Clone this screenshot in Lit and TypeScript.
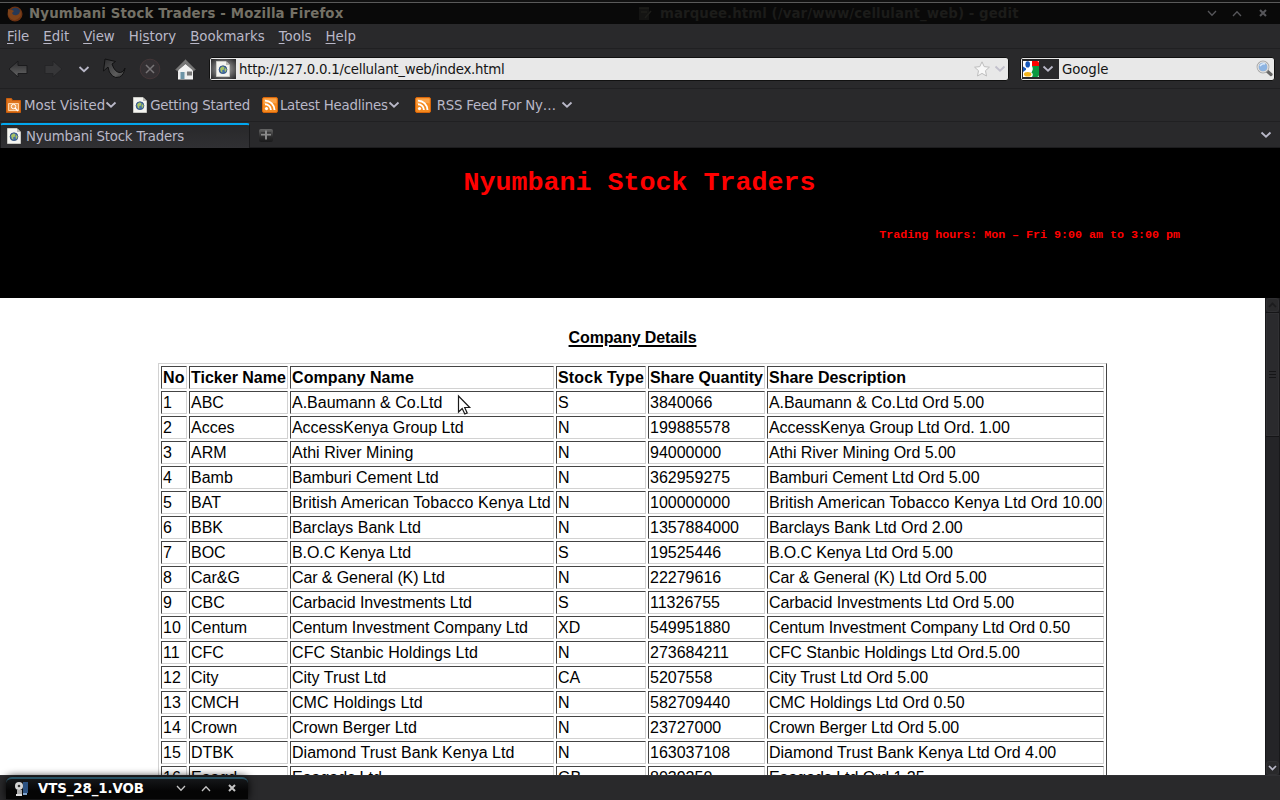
import { LitElement, html, css } from "lit";
import { customElement } from "lit/decorators.js";

// Header label with its tracking in px.
const HEADERS: [string, number][] = [
  ["No", 0.2], ["Ticker Name", 0], ["Company Name", 0.08], ["Stock Type", 0.18], ["Share Quantity", -0.07], ["Share Description", 0],
];

const ROWS: string[][] = [
  ["1", "ABC", "A.Baumann & Co.Ltd", "S", "3840066", "A.Baumann & Co.Ltd Ord 5.00"],
  ["2", "Acces", "AccessKenya Group Ltd", "N", "199885578", "AccessKenya Group Ltd Ord. 1.00"],
  ["3", "ARM", "Athi River Mining", "N", "94000000", "Athi River Mining Ord 5.00"],
  ["4", "Bamb", "Bamburi Cement Ltd", "N", "362959275", "Bamburi Cement Ltd Ord 5.00"],
  ["5", "BAT", "British American Tobacco Kenya Ltd", "N", "100000000", "British American Tobacco Kenya Ltd Ord 10.00"],
  ["6", "BBK", "Barclays Bank Ltd", "N", "1357884000", "Barclays Bank Ltd Ord 2.00"],
  ["7", "BOC", "B.O.C Kenya Ltd", "S", "19525446", "B.O.C Kenya Ltd Ord 5.00"],
  ["8", "Car&G", "Car & General (K) Ltd", "N", "22279616", "Car & General (K) Ltd Ord 5.00"],
  ["9", "CBC", "Carbacid Investments Ltd", "S", "11326755", "Carbacid Investments Ltd Ord 5.00"],
  ["10", "Centum", "Centum Investment Company Ltd", "XD", "549951880", "Centum Investment Company Ltd Ord 0.50"],
  ["11", "CFC", "CFC Stanbic Holdings Ltd", "N", "273684211", "CFC Stanbic Holdings Ltd Ord.5.00"],
  ["12", "City", "City Trust Ltd", "CA", "5207558", "City Trust Ltd Ord 5.00"],
  ["13", "CMCH", "CMC Holdings Ltd", "N", "582709440", "CMC Holdings Ltd Ord 0.50"],
  ["14", "Crown", "Crown Berger Ltd", "N", "23727000", "Crown Berger Ltd Ord 5.00"],
  ["15", "DTBK", "Diamond Trust Bank Kenya Ltd", "N", "163037108", "Diamond Trust Bank Kenya Ltd Ord 4.00"],
  ["16", "Eaagd", "Eaagads Ltd", "GB", "8039250", "Eaagads Ltd Ord 1.25"],
];

// Width adjustment in px for the name and description of each row.
const NAME_FIT = [0, -1, 0.5, 0, 3, 0, -1, -2, -1.5, -2.5, 2, 0, 1, -0.5, 1, 0];
const DESC_FIT = [-2, -3, -1, -3, 2, -2, -3, -4, -3, -4, 0, -2, -1, -2, -1, -1];

const tracking = (row: number, col: number, text: string) => {
  const fit = col === 2 ? NAME_FIT[row] : col === 5 ? DESC_FIT[row] : 0;
  return `letter-spacing:${(fit / text.length).toFixed(3)}px`;
};

const chevron = (cls = "") => html`<svg class="chev ${cls}" width="12" height="8" viewBox="0 0 12 8"><path d="M1.500 1.500 L6 5.700 L10.500 1.500" fill="none" stroke="currentColor" stroke-width="1.800"/></svg>`;

const page = html`<svg width="14" height="16" viewBox="0 0 14 16">
  <path d="M.5.5H10l3.500 3.500V15.500H.5z" fill="#f4f4f0" stroke="#c9c9c4"/>
  <path d="M10 .5V4h3.500z" fill="#b9b9b4"/>
  <circle cx="7" cy="8.700" r="3.900" fill="#4470a8" stroke="#2c4b78" stroke-width=".8"/>
  <path d="M4 7.500l2-2 2.500.5-.5 2.500-2 1 .5 2-1.500-.5zM8.500 8l1.500-1 .6 2-1.600 2.500z" fill="#a9c464"/>
</svg>`;

const rss = html`<svg width="16" height="16" viewBox="0 0 16 16">
  <rect x=".5" y=".5" width="15" height="15" rx="1.500" fill="#f58a1f" stroke="#d8650a"/>
  <path d="M1.500 1.500h13v5q-6-2-13 1z" fill="#fba349"/>
  <circle cx="4.500" cy="11.600" r="1.600" fill="#fff"/>
  <path d="M3 7.200a5.900 5.900 0 0 1 5.900 5.900M3 3.600a9.500 9.500 0 0 1 9.500 9.500" fill="none" stroke="#fff" stroke-width="1.900"/>
</svg>`;

const winButtons = () => html`<span class="wb">
  <svg width="10" height="7" viewBox="0 0 10 7"><path d="M1 1l4 4.300L9 1" fill="none" stroke="currentColor" stroke-width="1.300"/></svg>
  <svg width="10" height="7" viewBox="0 0 10 7"><path d="M1 6l4-4.300L9 6" fill="none" stroke="currentColor" stroke-width="1.300"/></svg>
  <svg class="x" width="8" height="8" viewBox="0 0 8 8"><path d="M1 1l6 6M7 1L1 7" stroke="currentColor" stroke-width="2"/></svg>
</span>`;

@customElement("app-root")
export class AppRoot extends LitElement {
  static styles = css`
    :host { display: flex; flex-direction: column; position: relative; width: 1280px; height: 800px; overflow: hidden; background: #29292b;
      font-family: "DejaVu Sans", sans-serif; font-size: 13.33px; color: #b9b8c8; white-space: nowrap; }
    * { box-sizing: border-box; }
    svg { display: block; flex: none; }
    .grow { flex: 1; }
    .title { height: 24px; background: #090909; border-top: 2px solid #111; display: flex; align-items: center; padding: 1px 13px 0 7px; font-weight: bold; color: #747166; box-shadow: inset 0 1px #5a5a5a; }
    .title .name { margin-left: 6px; width: 608px; letter-spacing: .15px; }
    .title .ghost { color: #1c1c1a; margin-left: 7px; letter-spacing: .08px; }
    .wb { display: flex; align-items: center; gap: 15px; color: #56565a; margin-bottom: 1px; }
    .wb .x { margin-left: 2px; }
    .menu { height: 25px; display: flex; align-items: center; gap: 14px; padding: 0 7px; border-bottom: 1px solid #202022; }
    .menu u { text-underline-offset: 2px; }
    .nav { height: 40px; display: flex; align-items: center; border-bottom: 1px solid #202022; padding: 0 5px 0 8px; }
    .url, .search { height: 24px; display: flex; align-items: center; background: #e8e8e8; border: 1px solid #111; border-radius: 3px; color: #151515; }
    .url { width: 800px; padding: 0 2px 0 1px; }
    .url .text { letter-spacing: -.25px; padding-top: 1px; }
    .search .text { letter-spacing: -.1px; padding-top: 1px; }
    .fav { width: 25px; height: 20px; display: flex; align-items: center; justify-content: center; background: radial-gradient(#aaa 10%, #303032 90%); margin-right: 3px; padding-right: 2px; }
    .search { width: 255px; margin-left: 11px; padding: 0 1px; }
    .eng { width: 37px; height: 20px; background: #29292b; display: flex; align-items: center; gap: 3px; padding-left: 1px; margin-right: 3px; }
    .chev { color: #b9b8c8; }
    .pale { color: #c2c0cc; margin-left: 4px; }
    .marks { height: 33px; display: flex; align-items: center; border-bottom: 1px solid #202022; padding: 0 6px; }
    .marks span { margin-left: 3px; letter-spacing: -.22px; }
    .marks .m1 { letter-spacing: 0; }
    .marks .near { margin-left: 2px; }
    .g1 { margin-left: 16px; }
    .marks .rss1 { margin-left: 12px; }
    .marks .rss2 { margin-left: 15px; }
    .marks .far { margin-left: 6px; margin-right: 5px; }
    .tabs { height: 26px; display: flex; align-items: center; padding-right: 8px; border-bottom: 1px solid #1c1c1e; }
    .tab { width: 250px; height: 25px; margin-top: 1px; border-top: 2px solid #02a7ef; border-right: 1px solid #19191b; border-left: 1px solid #19191b; border-radius: 3px 3px 0 0; background: linear-gradient(#28282a, #303033); display: flex; align-items: center; padding-left: 6px; gap: 5px; letter-spacing: -.2px; }
    .plus { margin-left: 9px; margin-top: 2px; }
    .banner { height: 150px; background: #000; color: #f00; font-family: "Courier 10 Pitch", "Liberation Mono", monospace; font-weight: bold; display: flex; flex-direction: column; }
    .h1 { font-size: 26.67px; line-height: 30px; margin-top: 20px; text-align: center; padding-right: 1px; }
    .hours { font-size: 11.67px; line-height: 14px; text-align: right; margin: 30px 100px 0 0; }
    .view { height: 477px; display: flex; background: #fff; overflow: hidden; }
    .doc { width: 1265px; display: flex; flex-direction: column; align-items: center; color: #000; font: 16px/19px "Liberation Sans", Arial, sans-serif; }
    .cap { font-weight: bold; line-height: 18px; margin: 31px 0 16px; letter-spacing: -.13px; text-decoration: underline; text-decoration-thickness: 2px; text-underline-offset: 2px; }
    .table { display: grid; grid-template-columns: 26px 99px 264px 90px 117px 337px; grid-auto-rows: 23px; gap: 2px; padding: 2px; border: 1px solid #d2d2d2; border-right-color: #444; width: 949px; flex: none; }
    .cell { border: 1px solid #444; border-right-color: #d2d2d2; border-bottom-color: #d2d2d2; padding: 1px; line-height: 20px; }
    .head { font-weight: bold; }
    .bar { width: 15px; background: #242427; border-left: 1px solid #18181a; border-right: 1px solid #18181a; display: flex; flex-direction: column; align-items: center; color: #1b1b1d; }
    .btn { width: 13px; height: 14px; border: 1px solid #303033; display: flex; align-items: center; justify-content: center; border-radius: 3px; background: #29292b; }
    .thumb { width: 13px; height: 123px; border: 1px solid #303033; background: #2a2a2d; box-shadow: 0 -1px #151517, 0 1px #151517; margin-top: 1px; display: flex; flex-direction: column; align-items: center; justify-content: center; gap: 2px; }
    .thumb i { width: 7px; height: 1px; background: #151517; }
    .lit { color: #b9b8c8; }
    .foot { height: 25px; border-top: 1px solid #303033; padding: 1px 0 0 6px; }
    .win { width: 242px; height: 22px; background: linear-gradient(#151719, #050505 60%); border-top: 2px solid #285263; border-radius: 6px 6px 0 0; display: flex; align-items: center; padding: 0 12px 1px 8px; color: #fff; font-weight: bold; box-shadow: 0 0 9px #000; }
    .win .name { margin-left: 8px; letter-spacing: -.08px; }
    .win .wb { color: #c4c4c4; }
    .cursor { position: absolute; left: 457px; top: 394px; }
  `;

  render() {
    return html`
      <div class="title">
        <svg width="16" height="16" viewBox="0 0 16 16"><circle cx="8" cy="8" r="7.500" fill="#6b3213"/><circle cx="8.500" cy="6.500" r="4.800" fill="#263957"/><path d="M1 3q2 1 4 1l2 1-2 2q1 3 5 2 3-1 3-5 2 4 0 7-4 5-9 2-4-3-3-10z" fill="#7d421a"/></svg>
        <span class="name">Nyumbani Stock Traders - Mozilla Firefox</span>
        <svg width="16" height="16" viewBox="0 0 16 16"><path d="M2 2h10v12H2z" fill="#141413"/><path d="M2 2h10M4 6h6M14 5L8 12" stroke="#1e1e1b" stroke-width="1.500"/></svg>
        <span class="ghost">marquee.html (/var/www/cellulant_web) - gedit</span>
        <span class="grow"></span>${winButtons()}
      </div>
      <div class="menu">
        <span><u>F</u>ile</span><span><u>E</u>dit</span><span><u>V</u>iew</span><span>Hi<u>s</u>tory</span><span><u>B</u>ookmarks</span><span><u>T</u>ools</span><span><u>H</u>elp</span>
      </div>
      <div class="nav">
        <svg width="201" height="32" viewBox="0 0 201 32">
          <defs>
            <linearGradient id="a" x2="0" y2="1"><stop stop-color="#2c2c2e"/><stop offset="1" stop-color="#666"/></linearGradient>
            <linearGradient id="r" x2="1" y2="1"><stop stop-color="#2c2c2e"/><stop offset=".7" stop-color="#5c5c5c"/><stop offset="1" stop-color="#333"/></linearGradient>
            <linearGradient id="h" x2="0" y2="1"><stop stop-color="#ddd"/><stop offset="1" stop-color="#f5f5f5"/></linearGradient>
          </defs>
          <path d="M1 16l9-8v4.500h9v8h-9V24z" fill="url(#a)" stroke="#1b1b1d"/>
          <path d="M54 16l-9-8v4.500h-8v8h8V24z" fill="#363638" stroke="#252527"/>
          <path d="M71.500 14l4.500 4.200 4.500-4.200" fill="none" stroke="#b9b8c8" stroke-width="1.800"/>
          <path d="M97 6l10.500 2.500-3.500 2.500q3 9 8.500 8.500 3 0 4.500-4.500-1 7-5.500 9-4 1.500-7-1-4-3.500-4.500-9l-4.500 4z" fill="url(#r)" stroke="#101011"/>
          <circle cx="142" cy="16" r="9.800" fill="#343033" stroke="#443638"/>
          <path d="M138 12l8 8M146 12l-8 8" stroke="#777476" stroke-width="1.500"/>
          <path d="M171 15h14v11.500h-15V15z" fill="url(#h)"/>
          <path d="M167.500 16.500l10-10 10 10-2 1.500-8-7-8 7z" fill="#777" stroke="#555"/>
          <path d="M177.500 11l7 6v2h-14v-2z" fill="#f2f2f2"/>
          <path d="M172.500 19h4v7h-4z" fill="#6d94a6"/><path d="M179 18.500h5v4h-5z" fill="#777"/>
        </svg>
        <div class="url"><span class="fav">${page}</span><span class="text">http://127.0.0.1/cellulant_web/index.html</span><span class="grow"></span>
          <svg width="16" height="16" viewBox="0 0 16 16"><path d="M8 .8l2.200 4.800 5.200.6-3.900 3.500 1 5.300L8 12.400 3.500 15l1-5.300L.6 6.200l5.200-.6z" fill="#f8f8f8" stroke="#bdbdbd"/></svg>
          ${chevron("pale")}
        </div>
        <div class="search"><span class="eng">
          <svg width="16" height="16" viewBox="0 0 16 16"><path d="M0 0h16v16H0z" fill="#fff"/><path d="M9 0h5q2 0 2 2v3H9z" fill="#f00"/><path d="M9 5h7v9q0 2-2 2H9q2-3-1-5 3-2 1-6z" fill="#0b9a42"/><path d="M0 5.500l4 2.500-4 3z" fill="#1557bb"/><ellipse cx="4.700" cy="3.400" rx="2.300" ry="3.100" fill="#1557bb"/><path d="M3 8q5 0 5 3" fill="none" stroke="#fff" stroke-width="2"/><ellipse cx="4.700" cy="13.300" rx="3.700" ry="2.300" fill="#f4b41a"/></svg>
          ${chevron()}</span><span class="text">Google</span><span class="grow"></span>
          <svg width="17" height="17" viewBox="0 0 17 17"><path d="M10.500 10.500l4.500 4" stroke="#666" stroke-width="3.200" stroke-linecap="round"/><circle cx="7" cy="7" r="5.400" fill="#8db4e2" stroke="#aaa" stroke-width="2"/><circle cx="7" cy="7" r="5" fill="none" stroke="#eee"/><path d="M4 6q2-3 5-2" stroke="#dcebfb" stroke-width="1.500" fill="none"/></svg>
        </div>
      </div>
      <div class="marks">
        <svg width="15" height="16" viewBox="0 0 15 16"><path d="M.5 1.500h5l1 2h8v12H.5z" fill="#dd741d" stroke="#c95c0c"/><path d="M2.500 6.500h10v7h-10z" fill="#ee9c51" stroke="#ffd5aa"/><circle cx="7.500" cy="9.500" r="2.200" fill="none" stroke="#fff"/><path d="M9 11l3 3" stroke="#fff" stroke-width="1.200"/></svg>
        <span class="m1">Most Visited</span>${chevron()}
        <div class="g1">${page}</div><span>Getting Started</span>
        <div class="rss1">${rss}</div><span class="near">Latest Headlines</span>${chevron()}
        <div class="rss2">${rss}</div><span class="far">RSS Feed For Ny…</span>${chevron()}
      </div>
      <div class="tabs">
        <div class="tab">${page}<span>Nyumbani Stock Traders</span></div>
        <svg class="plus" width="14" height="14" viewBox="0 0 14 14"><defs><linearGradient id="p" x2="0" y2="1"><stop stop-color="#666"/><stop offset=".6" stop-color="#2a2a2b"/><stop offset="1" stop-color="#1a1a1b"/></linearGradient></defs><rect width="14" height="13" rx="2" fill="url(#p)"/><path d="M2 5.500h10M7 1.500v9" stroke="#8a8a8a" stroke-width="2"/><path d="M2 4h4M8 4h4" stroke="#222"/></svg>
        <span class="grow"></span>${chevron()}
      </div>
      <div class="banner">
        <div class="h1">Nyumbani Stock Traders</div>
        <div class="hours">Trading hours: Mon – Fri 9:00 am to 3:00 pm</div>
      </div>
      <div class="view">
        <div class="doc">
          <div class="cap">Company Details</div>
          <div class="table">
            ${HEADERS.map(([h, ls]) => html`<div class="cell head" style="letter-spacing:${ls}px">${h}</div>`)}
            ${ROWS.map((r, i) => r.map((c, j) => html`<div class="cell" style=${tracking(i, j, c)}>${c}</div>`))}
          </div>
        </div>
        <div class="bar">
          <div class="btn"><svg width="9" height="6" viewBox="0 0 9 6"><path d="M1 5l3.500-3.500L8 5" fill="none" stroke="currentColor" stroke-width="1.700"/></svg></div>
          <div class="thumb"><i></i><i></i><i></i></div>
          <span class="grow"></span>
          <div class="btn lit"><svg width="9" height="6" viewBox="0 0 9 6"><path d="M1 1l3.500 3.500L8 1" fill="none" stroke="currentColor" stroke-width="1.700"/></svg></div>
        </div>
      </div>
      <div class="foot"><div class="win">
        <svg width="16" height="16" viewBox="0 0 16 16"><path d="M9 1h5v11H9z" fill="#2c5282"/><circle cx="5" cy="5" r="4" fill="#d5d5d5"/><circle cx="5" cy="5" r="1.300" fill="#333"/><path d="M3 9h5v4H3z" fill="#aaa"/><path d="M2 14h6" stroke="#ddd" stroke-width="2"/><path d="M9 13h4" stroke="#7fa3cc" stroke-width="2"/></svg>
        <span class="name">VTS_28_1.VOB</span><span class="grow"></span>${winButtons()}
      </div></div>
      <svg class="cursor" width="15" height="22" viewBox="0 0 15 22"><path d="M1.500 2v16l3.700-3.500 2.600 5.500 2.400-1.100-2.500-5.400h5z" fill="#fff" stroke="#1a1a1a" stroke-width="1.200"/></svg>
    `;
  }
}
